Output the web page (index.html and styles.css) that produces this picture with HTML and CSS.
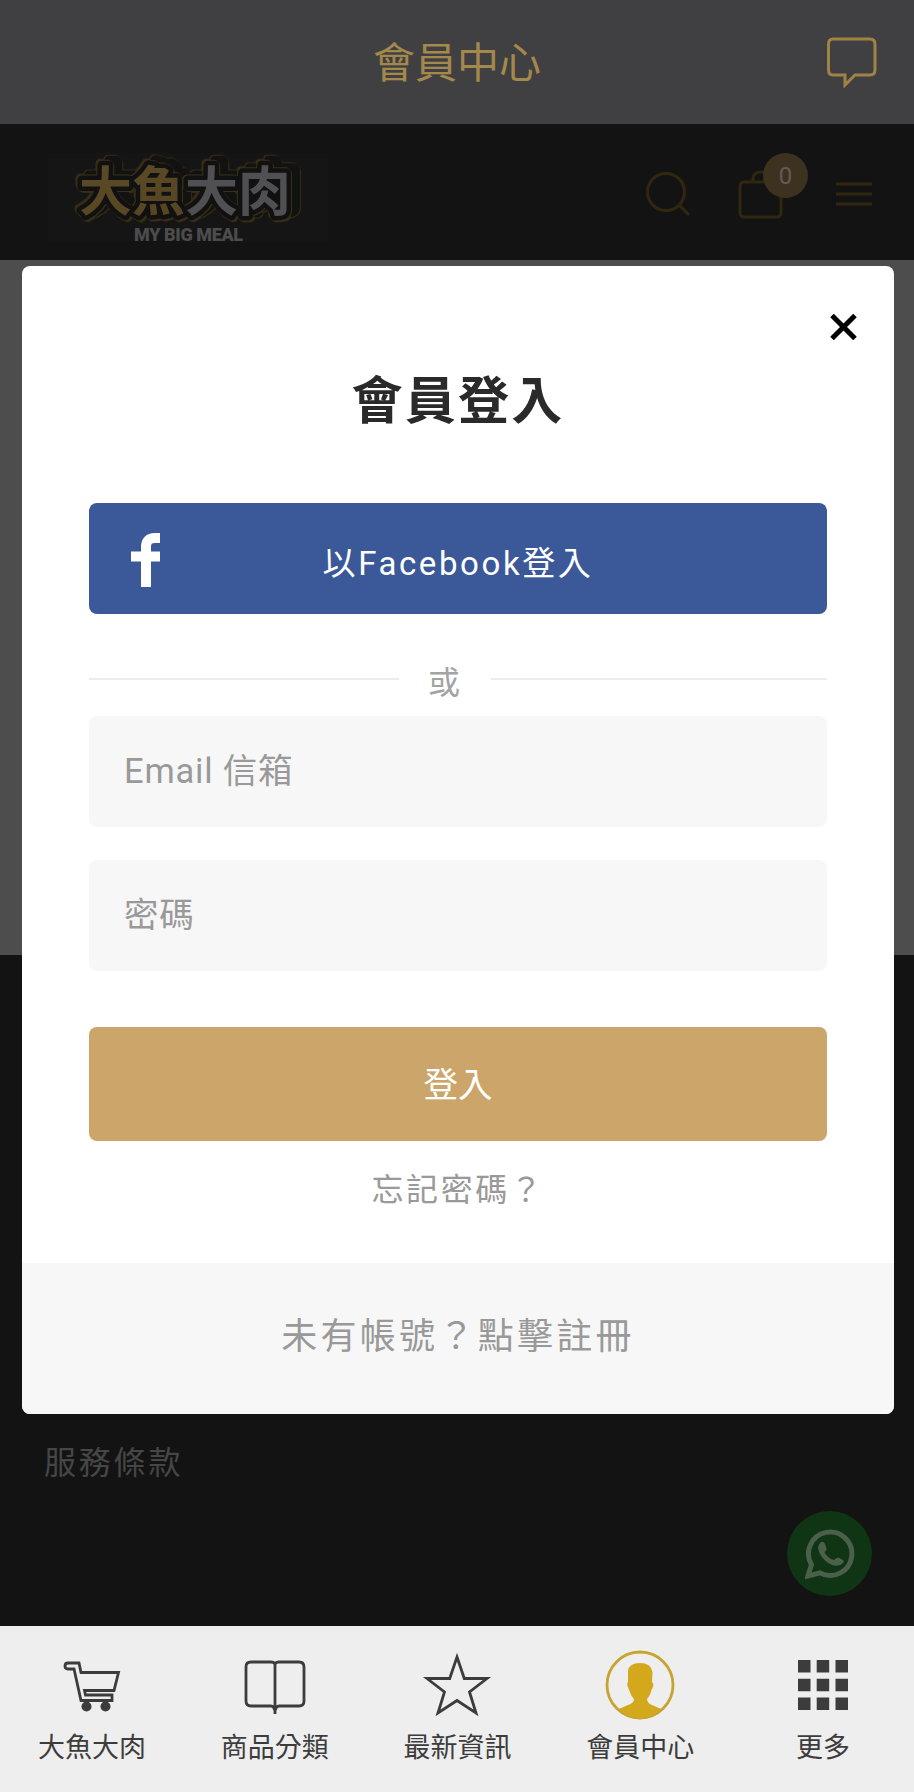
FILE: index.html
```html
<!DOCTYPE html>
<html lang="zh-Hant">
<head>
    <meta charset="UTF-8">
    <meta name="viewport" content="width=device-width, initial-scale=1.0">
    <title>會員中心</title>
    <link rel="stylesheet" href="styles.css">
</head>
<body>

    <!-- App title bar -->
    <header class="title-bar">
        <h1>會員中心</h1>
        <svg class="chat-icon" width="50" height="52" viewBox="0 0 50 52">
            <path d="M6 3H43Q48 3 48 8V34Q48 39 43 39H28L18 49V39H6Q1.500 39 1.500 34V8Q1.500 3 6 3Z"/>
        </svg>
    </header>

    <!-- Shop header -->
    <div class="shop-header">
        <svg class="logo" width="280" height="88" viewBox="0 0 280 88">
            <defs>
                <linearGradient id="gold" x1="0" y1="0" x2="1" y2="1">
                    <stop offset="0" stop-color="#5b4b26"/>
                    <stop offset="0.7" stop-color="#554522"/>
                    <stop offset="1" stop-color="#3b2915"/>
                </linearGradient>
            </defs>
            <text class="logo-name" x="31" y="58" fill="url(#gold)">大魚<tspan fill="#505052">大肉</tspan></text>
            <text class="logo-sub" x="86" y="88" textLength="109">MY BIG MEAL</text>
        </svg>
        <div class="shop-tools">
            <svg width="46" height="48" viewBox="0 0 46 48">
                <circle cx="21" cy="20" r="18.5"/>
                <path d="M34 33L44 43"/>
            </svg>
            <div class="bag">
                <svg width="46" height="50" viewBox="0 0 46 50">
                    <rect x="2" y="12" width="41" height="35" rx="4"/>
                    <path d="M15 12V9Q15 2 23 2Q31 2 31 9V12"/>
                </svg>
                <span class="badge">0</span>
            </div>
            <svg class="menu-icon" width="36" height="26" viewBox="0 0 36 26">
                <path d="M0 3H36M0 13H36M0 23H36"/>
            </svg>
        </div>
    </div>

    <main class="content"></main>

    <footer class="site-footer">
        <a class="terms">服務條款</a>
        <div class="whatsapp">
            <svg width="50" height="50" viewBox="0 0 50 50">
                <path class="bubble" d="M3 47L6.4 35.6A21.7 21.7 0 1 1 15 43.9Z"/>
                <path class="phone" d="M15 14Q18 11 20 15L21.500 19Q22 21 19.500 23.500Q23 29.500 29 31Q32 28 33.500 28.500L38 31Q40 32 37 35Q33 38 27 36Q18 32 14 23Q12 17 15 14Z"/>
            </svg>
        </div>
    </footer>

    <!-- Bottom tabs -->
    <nav class="tab-bar">
        <a class="tab">
            <svg width="70" height="70" viewBox="0 0 70 70">
                <path d="M11 13H22L24 22.500H61.500L57 40.500H27.500L28.500 45H55V50.500H24L17 19H11Q8 19 8 16T11 13Z"/>
                <circle class="solid" cx="29.500" cy="56.500" r="5"/>
                <circle class="solid" cx="48.500" cy="56.500" r="5"/>
            </svg>
            <span>大魚大肉</span>
        </a>
        <a class="tab">
            <svg width="70" height="70" viewBox="0 0 70 70">
                <path d="M35 14Q34 12 31 12H11Q6 12 6 17V51Q6 56 11 56H31Q34 56 35 61Q36 56 39 56H59Q64 56 64 51V17Q64 12 59 12H39Q36 12 35 14V64"/>
            </svg>
            <span>商品分類</span>
        </a>
        <a class="tab">
            <svg width="70" height="70" viewBox="0 0 70 70">
                <path d="M35 7L42.300 28.500L65 28.500L47.500 42L54 63L35 50.500L16 63L22.500 42L5 28.500L27.700 28.500Z"/>
            </svg>
            <span>最新資訊</span>
        </a>
        <a class="tab active">
            <svg width="70" height="70" viewBox="0 0 70 70">
                <circle cx="35" cy="35" r="33"/>
                <path class="solid" d="M23 21Q24 13 35 13Q46 13 47.500 22L47 32Q49 33 48 37L46.500 40Q45 46 42 49Q42 53 47 55L56 59Q47 68 35 68Q23 68 14 59L23 55Q29 53 29 49Q26 46 24.500 41L22.500 36Q21.500 33 23 32Z"/>
            </svg>
            <span>會員中心</span>
        </a>
        <a class="tab">
            <svg width="70" height="70" viewBox="0 0 70 70">
                <path class="solid" d="M10 10h12.500v12.500h-12.500zM28.700 10h12.500v12.500h-12.500zM47.500 10h12.500v12.500h-12.500zM10 28.700h12.500v12.500h-12.500zM28.700 28.700h12.500v12.500h-12.500zM47.500 28.700h12.500v12.500h-12.500zM10 47.500h12.500v12.500h-12.500zM28.700 47.500h12.500v12.500h-12.500zM47.500 47.500h12.500v12.500h-12.500z"/>
            </svg>
            <span>更多</span>
        </a>
    </nav>

    <!-- Login popup -->
    <div class="modal">
        <div class="modal-top">
            <svg class="close" width="27" height="26" viewBox="0 0 27 26">
                <path d="M2 1.500L25 24.500M25 1.500L2 24.500"/>
            </svg>
        </div>
        <h2>會員登入</h2>
        <form class="login-form">
            <button type="button" class="button facebook">
                <svg class="fb-icon" width="30" height="54" viewBox="0 0 30 54">
                    <path d="M29 5H24Q15 5 15 14V54M0 23.500H29"/>
                </svg>
                <span>以Facebook登入</span>
            </button>
            <div class="divider"><span>或</span></div>
            <input type="text" placeholder="Email 信箱">
            <input type="password" placeholder="密碼">
            <button type="button" class="button login">登入</button>
            <a class="forgot">忘記密碼？</a>
        </form>
        <div class="register">未有帳號？點擊註冊</div>
    </div>

</body>
</html>
```

FILE: styles.css
```css
* {
    box-sizing: border-box;
}
body {
    font-family: Roboto, "Noto Sans CJK TC", sans-serif;
    margin: 0;
    height: 1792px;
    display: flex;
    flex-direction: column;
    overflow: hidden;
    background-color: #131313;
    position: relative;
}
svg {
    display: block;
    fill: none;
}
.title-bar {
    height: 124px;
    display: grid;
    grid-template-columns: 1fr auto 1fr;
    align-items: center;
    padding-right: 37px;
    padding-left: 37px;
    background-color: #404042;
}
.title-bar h1 {
    grid-column: 2;
    margin: 0 0 6px;
    font-size: 42px;
    font-weight: 400;
    color: #a4884c;
}
.chat-icon {
    justify-self: end;
    stroke: #a08344;
    stroke-width: 3;
}
.shop-header {
    height: 136px;
    display: flex;
    justify-content: space-between;
    padding: 29px 42px 0 48px;
    background-color: #131313;
}
.logo {
    background-color: #151515;
    overflow: visible;
}
.logo-name {
    font-family: "Noto Sans CJK TC", sans-serif;
    font-size: 53px;
    font-weight: 700;
    stroke: #111;
    stroke-width: 9px;
    stroke-linejoin: round;
    paint-order: stroke;
    /* gold edge, dark offset copy, gold edge again */
    filter: drop-shadow(1px 1px 0 #3a3018) drop-shadow(-1px -1px 0 #3a3018)
        drop-shadow(8px -4px 0 #121211)
        drop-shadow(1px 1px 0 #332a16) drop-shadow(-1px -1px 0 #332a16);
}
.logo-sub {
    font-size: 18px;
    font-weight: 900;
    fill: #4c4c4d;
}
.shop-tools {
    display: flex;
    align-items: flex-start;
    padding-top: 19px;
    stroke: #30270f;
    stroke-width: 3;
}
.bag {
    position: relative;
    margin: -2px 52px 0 47px;
}
.badge {
    position: absolute;
    top: -17px;
    left: 25px;
    width: 45px;
    height: 45px;
    border-radius: 50%;
    background-color: #3d3220;
    color: #605c57;
    font-size: 24px;
    line-height: 46px;
    text-align: center;
}
.menu-icon {
    margin-top: 9px;
}
.content {
    height: 695px;
    background-color: #4d4d4d;
}
.site-footer {
    height: 671px;
    display: flex;
    justify-content: space-between;
    align-items: flex-end;
    padding: 0 42px 30px 44px;
    background-color: #131313;
}
.terms {
    margin-bottom: 113px;
    font-size: 32px;
    letter-spacing: 2.8px;
    color: #464646;
}
.whatsapp {
    width: 85px;
    height: 85px;
    display: flex;
    justify-content: center;
    align-items: center;
    border-radius: 50%;
    background-color: #103514;
}
.bubble {
    stroke: #4b604b;
    stroke-width: 5;
}
.phone {
    fill: #4b604b;
}
.tab-bar {
    height: 166px;
    display: flex;
    background-color: #eee;
}
.tab {
    flex: 1;
    display: flex;
    flex-direction: column;
    align-items: center;
    padding-top: 24px;
    padding-left: 1px;
    font-size: 27px;
    line-height: 40px;
    color: #3c3c3c;
    stroke: #3c3c3c;
    stroke-width: 2.8;
}
.tab span {
    margin-top: 8px;
}
.solid {
    fill: #3c3c3c;
    stroke: none;
}
.active {
    stroke: #c7a431;
}
.active .solid {
    fill: #d4a81c;
}
.modal {
    position: absolute;
    top: 266px;
    left: 22px;
    width: 872px;
    height: 1148px;
    display: flex;
    flex-direction: column;
    border-radius: 8px;
    background-color: #fff;
    overflow: hidden;
}
.modal-top {
    display: flex;
    justify-content: flex-end;
    padding: 48px 37px 0 0;
}
.close {
    stroke: #000;
    stroke-width: 5;
}
.modal h2 {
    margin: 26px 0 0;
    font-size: 51px;
    line-height: 72px;
    letter-spacing: 2.3px;
    text-align: center;
    color: #2a2a2a;
}
.login-form {
    display: flex;
    flex-direction: column;
    padding: 65px 67px 0;
}
.button {
    border: none;
    border-radius: 8px;
    font-family: inherit;
    color: #fff;
    cursor: pointer;
}
.facebook {
    height: 111px;
    display: grid;
    grid-template-columns: 30px 1fr 30px;
    align-items: center;
    padding: 4px 42px 0;
    background-color: #3b5998;
    font-size: 33px;
    letter-spacing: 2.6px;
}
.fb-icon {
    margin-bottom: 2px;
    stroke: #fff;
    stroke-width: 10;
}
.divider {
    height: 102px;
    display: flex;
    align-items: center;
    padding-top: 28px;
    font-size: 32px;
    color: #a3a3a3;
}
.divider::before, .divider::after {
    content: "";
    height: 2px;
    background-color: #ececec;
}
.divider::before {
    width: 310px;
}
.divider::after {
    flex: 1;
}
.divider span {
    margin: 1px 31px 0 29px;
}
.login-form input {
    height: 111px;
    margin-bottom: 33px;
    padding: 0 35px 2px;
    border: none;
    border-radius: 8px;
    background-color: #f7f7f7;
    font-family: inherit;
    font-size: 34.5px;
    letter-spacing: 0.8px;
}
.login-form input::placeholder {
    color: #999;
}
.login {
    height: 114px;
    margin-top: 23px;
    padding-bottom: 5px;
    background-color: #cba56a;
    font-size: 34.5px;
}
.forgot {
    margin-top: 25px;
    font-size: 32px;
    line-height: 48px;
    letter-spacing: 2.6px;
    text-align: center;
    color: #999;
}
.register {
    height: 151px;
    margin-top: auto;
    background-color: #f7f7f7;
    font-size: 36px;
    line-height: 149px;
    letter-spacing: 3.3px;
    text-align: center;
    color: #999;
}
```
